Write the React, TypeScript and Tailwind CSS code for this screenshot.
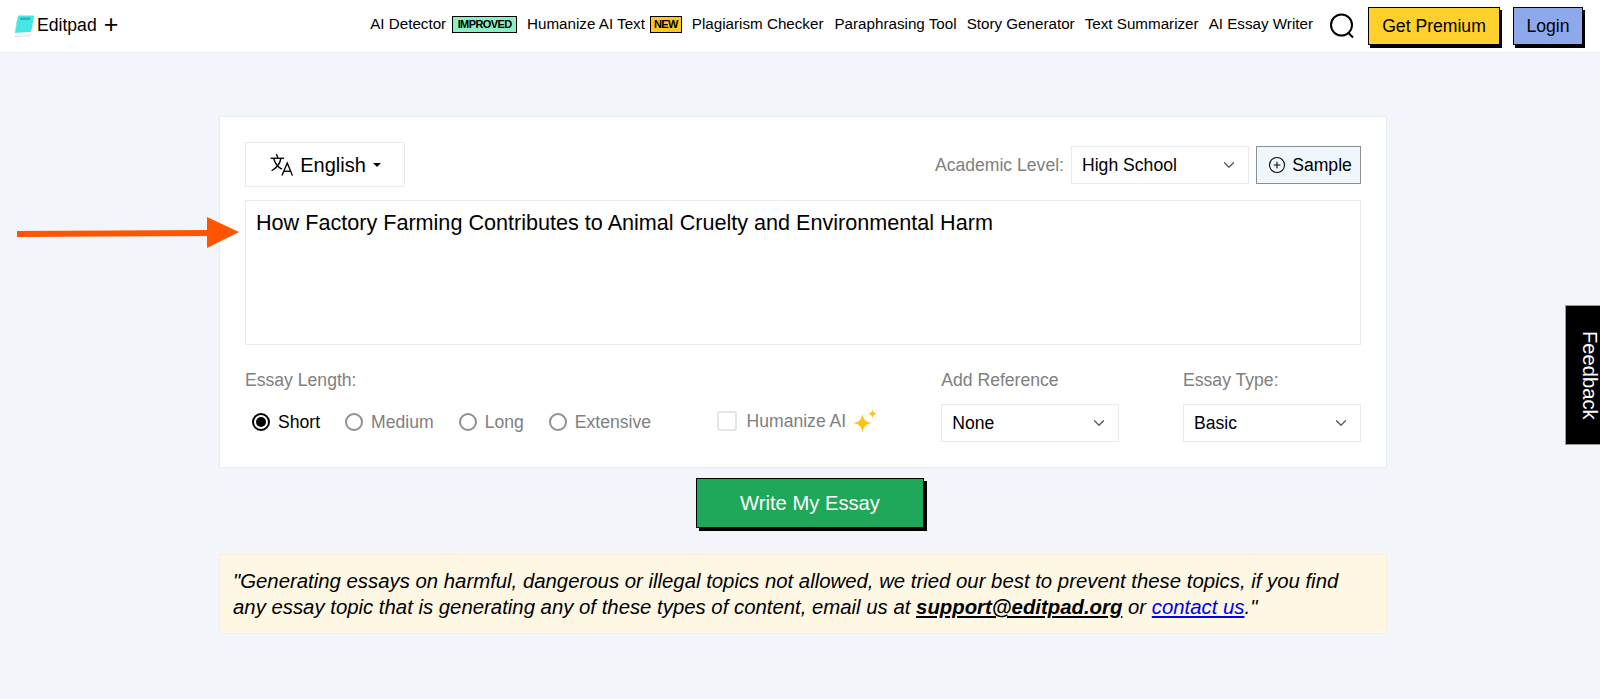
import { ChevronDown, CirclePlus } from 'lucide-react';

const navLinks = ['Paraphrasing Tool', 'Story Generator', 'Text Summarizer', 'AI Essay Writer'];

function Logo() {
  return (
    <svg width="21" height="22" viewBox="0 0 21 22" className="shrink-0">
      <path d="M2 6 L17 4 L17 20 Q17 21 16 21 L2 22 Q0.5 22 0.8 20 Z" fill="#dfe3e6" />
      <path d="M4 0.5 L19 0.5 Q20.5 0.5 20 2 L17 17 L1 18 Z" fill="#45e6e6" />
      <path d="M6.5 2.5 L16.5 2.5 L16 5 L6 5 Z" fill="#2bb4ba" />
      <path d="M1 18 L17 17 L17 20 L1.5 21 Z" fill="#f8f8f8" />
    </svg>
  );
}

function Sparkles() {
  return (
    <svg width="26" height="26" viewBox="0 0 26 26">
      <path d="M10.5 6 C11.5 11.5 13.5 14 20 15 C13.5 16 11.5 18.5 10.5 25 C9.5 18.5 7.5 16 1 15 C7.5 14 9.5 11.5 10.5 6 Z" fill="#fcc419" />
      <path d="M20.5 1 C21 4 22 5.2 25 5.7 C22 6.2 21 7.4 20.5 10.5 C20 7.4 19 6.2 16 5.7 C19 5.2 20 4 20.5 1 Z" fill="#fcc419" />
    </svg>
  );
}

function TranslateIcon() {
  return (
    <svg width="25" height="25" viewBox="0 0 24 24" fill="none" stroke="currentColor" strokeWidth="1.3">
      <path d="M1.5 6 H14.5" />
      <path d="M7 2 L8.5 5.5" />
      <path d="M4.5 6 C5.5 10.5 8.5 14.5 12.5 16.5" />
      <path d="M11.5 6 C10.5 11 7 15.5 2.5 18" />
      <path d="M12.5 22.5 L17.5 10.5 L22.5 22.5" />
      <path d="M14.3 18.5 H20.7" />
    </svg>
  );
}

function SearchIcon() {
  return (
    <svg width="26" height="26" viewBox="0 0 26 26" fill="none" stroke="currentColor" strokeWidth="2" className="ml-[6px] mr-[13px]">
      <circle cx="12.5" cy="12" r="10.5" />
      <path d="M19.5 20 L24 24.5" />
    </svg>
  );
}

function Radio({ label, checked }: { label: string; checked?: boolean }) {
  return (
    <label className={`flex items-center gap-2 ${checked ? 'text-black' : 'text-[#808080]'}`}>
      <span
        className={`flex h-[18px] w-[18px] items-center justify-center rounded-full border-2 ${
          checked ? 'border-black' : 'border-[#8f8f8f]'
        }`}
      >
        {checked && <span className="h-[10px] w-[10px] rounded-full bg-black" />}
      </span>
      {label}
    </label>
  );
}

function SelectBox({ value, className }: { value: string; className: string }) {
  return (
    <div className={`flex items-center justify-between border border-[#e9ecef] bg-white pl-[10px] pr-[10px] text-[17.6px] text-black ${className}`}>
      {value}
      <ChevronDown className="h-[18px] w-[18px] text-[#555]" strokeWidth={1.6} />
    </div>
  );
}

export default function App() {
  return (
    <div className="relative h-[699px] overflow-hidden bg-[#f2f5fa] font-['Liberation_Sans',Arial,sans-serif] text-black">
      <header className="flex h-[53px] items-center justify-between border-b border-[#e9edf2] bg-white pl-[14px] pr-[17px]">
        <div className="flex items-center text-[17.6px]">
          <Logo />
          <span className="ml-[2px] mb-[2px]">Editpad</span>
          <span className="ml-[7px] mb-[2px] text-[25px] leading-none">+</span>
        </div>
        <nav className="flex items-center text-[15.2px]">
          <a className="mb-[3px] mr-[6px]">AI Detector</a>
          <span className="mb-[3px] mr-[10px] border border-black bg-[#8af0c4] px-[4.5px] text-[11px] font-bold leading-[15px] tracking-[-0.6px]">IMPROVED</span>
          <a className="mb-[3px] mr-[5px]">Humanize AI Text</a>
          <span className="mb-[3px] mr-[10px] border border-black bg-[#ffc71f] px-[3px] text-[11px] font-bold leading-[15px] tracking-[-0.6px]">NEW</span>
          <a className="mb-[3px] mr-[11px]">Plagiarism Checker</a>
          {navLinks.map((link) => (
            <a key={link} className="mb-[3px] mr-[10px]">
              {link}
            </a>
          ))}
          <SearchIcon />
          <button className="mr-[13px] h-[38px] w-[132px] border border-black bg-[#ffcf2b] text-[17.6px] shadow-[2px_3px_0_#000]">Get Premium</button>
          <button className="h-[38px] w-[70px] border border-black bg-[#8ea8ec] text-[17.6px] shadow-[2px_3px_0_#000]">Login</button>
        </nav>
      </header>

      <main className="ml-[219px] w-[1168px] pt-[63px]">
        <section className="h-[352px] border border-[#e9ecf1] bg-white px-[25px] pt-[25px]">
          <div className="flex items-start justify-between">
            <button className="flex h-[45px] w-[160px] items-center justify-center gap-[6px] border border-[#e9ecef] text-[20px]">
              <TranslateIcon />
              English
              <span className="ml-[1px] h-0 w-0 border-x-[4.5px] border-t-[4.5px] border-x-transparent border-t-black" />
            </button>
            <div className="mt-[4px] flex items-center text-[17.6px]">
              <span className="mr-[7px] text-[#808080]">Academic Level:</span>
              <SelectBox value="High School" className="h-[38px] w-[178px]" />
              <button className="ml-[7px] flex h-[38px] w-[105px] items-center justify-center gap-[6px] border border-[#8a8f94] bg-[#f0f7fb] pl-[3px]">
                <CirclePlus className="h-[18px] w-[18px]" strokeWidth={1.4} />
                Sample
              </button>
            </div>
          </div>

          <div className="mt-[13px] h-[145px] border border-[#e9ecef] px-[10px] py-[9px] text-[21.6px] leading-[26px]">
            How Factory Farming Contributes to Animal Cruelty and Environmental Harm
          </div>

          <div className="mt-[25px] flex items-start text-[17.6px] leading-[20px]">
            <div className="w-[472px]">
              <p className="text-[#808080]">Essay Length:</p>
              <div className="mt-[22px] flex gap-[25px] pl-[7px]">
                <Radio label="Short" checked />
                <Radio label="Medium" />
                <Radio label="Long" />
                <Radio label="Extensive" />
              </div>
            </div>
            <div className="flex w-[225px] items-center gap-[10px] pt-[38px] text-[#808080]">
              <span className="h-[20px] w-[20px] rounded-[3px] border-2 border-[#e4e6e8] bg-white" />
              <span className="flex items-center gap-[6px]">
                Humanize AI
                <Sparkles />
              </span>
            </div>
            <div className="w-[242px]">
              <p className="text-[#808080]">Add Reference</p>
              <SelectBox value="None" className="mt-[14px] h-[38px] w-[178px]" />
            </div>
            <div>
              <p className="text-[#808080]">Essay Type:</p>
              <SelectBox value="Basic" className="mt-[14px] h-[38px] w-[178px]" />
            </div>
          </div>
        </section>

        <div className="mt-[10px] flex pl-[477px]">
          <button className="h-[50px] w-[228px] border border-black bg-[#1fa85a] text-[20.2px] text-white shadow-[3px_3px_0_#000]">
            Write My Essay
          </button>
        </div>

        <div className="mt-[26px] border border-[#f8f0da] bg-[#fdf7e4] pb-[13px] pl-[13px] pr-[26px] pt-[13px] text-[20.35px] italic leading-[26px]">
          "Generating essays on harmful, dangerous or illegal topics not allowed, we tried our best to prevent these topics, if you find any essay topic that is generating any of these types of content, email us at{' '}
          <a className="font-bold underline">support@editpad.org</a> or <a className="text-[#0000ee] underline">contact us</a>."
        </div>
      </main>

      {/* annotation arrow over the page */}
      <svg className="absolute left-[17px] top-[217px]" width="222" height="31" viewBox="0 0 222 31">
        <path d="M0 14 L190 13 L190 0 L222 15 L190 31 L190 19 L0 20 Z" fill="#ff5500" />
      </svg>

      <div className="absolute right-0 top-[305px] flex h-[140px] w-[35px] items-center justify-center border border-r-0 border-[#9a9a9a] bg-black pl-[14px] text-[20.2px] leading-none text-white [writing-mode:vertical-rl]">
        Feedback
      </div>
    </div>
  );
}
